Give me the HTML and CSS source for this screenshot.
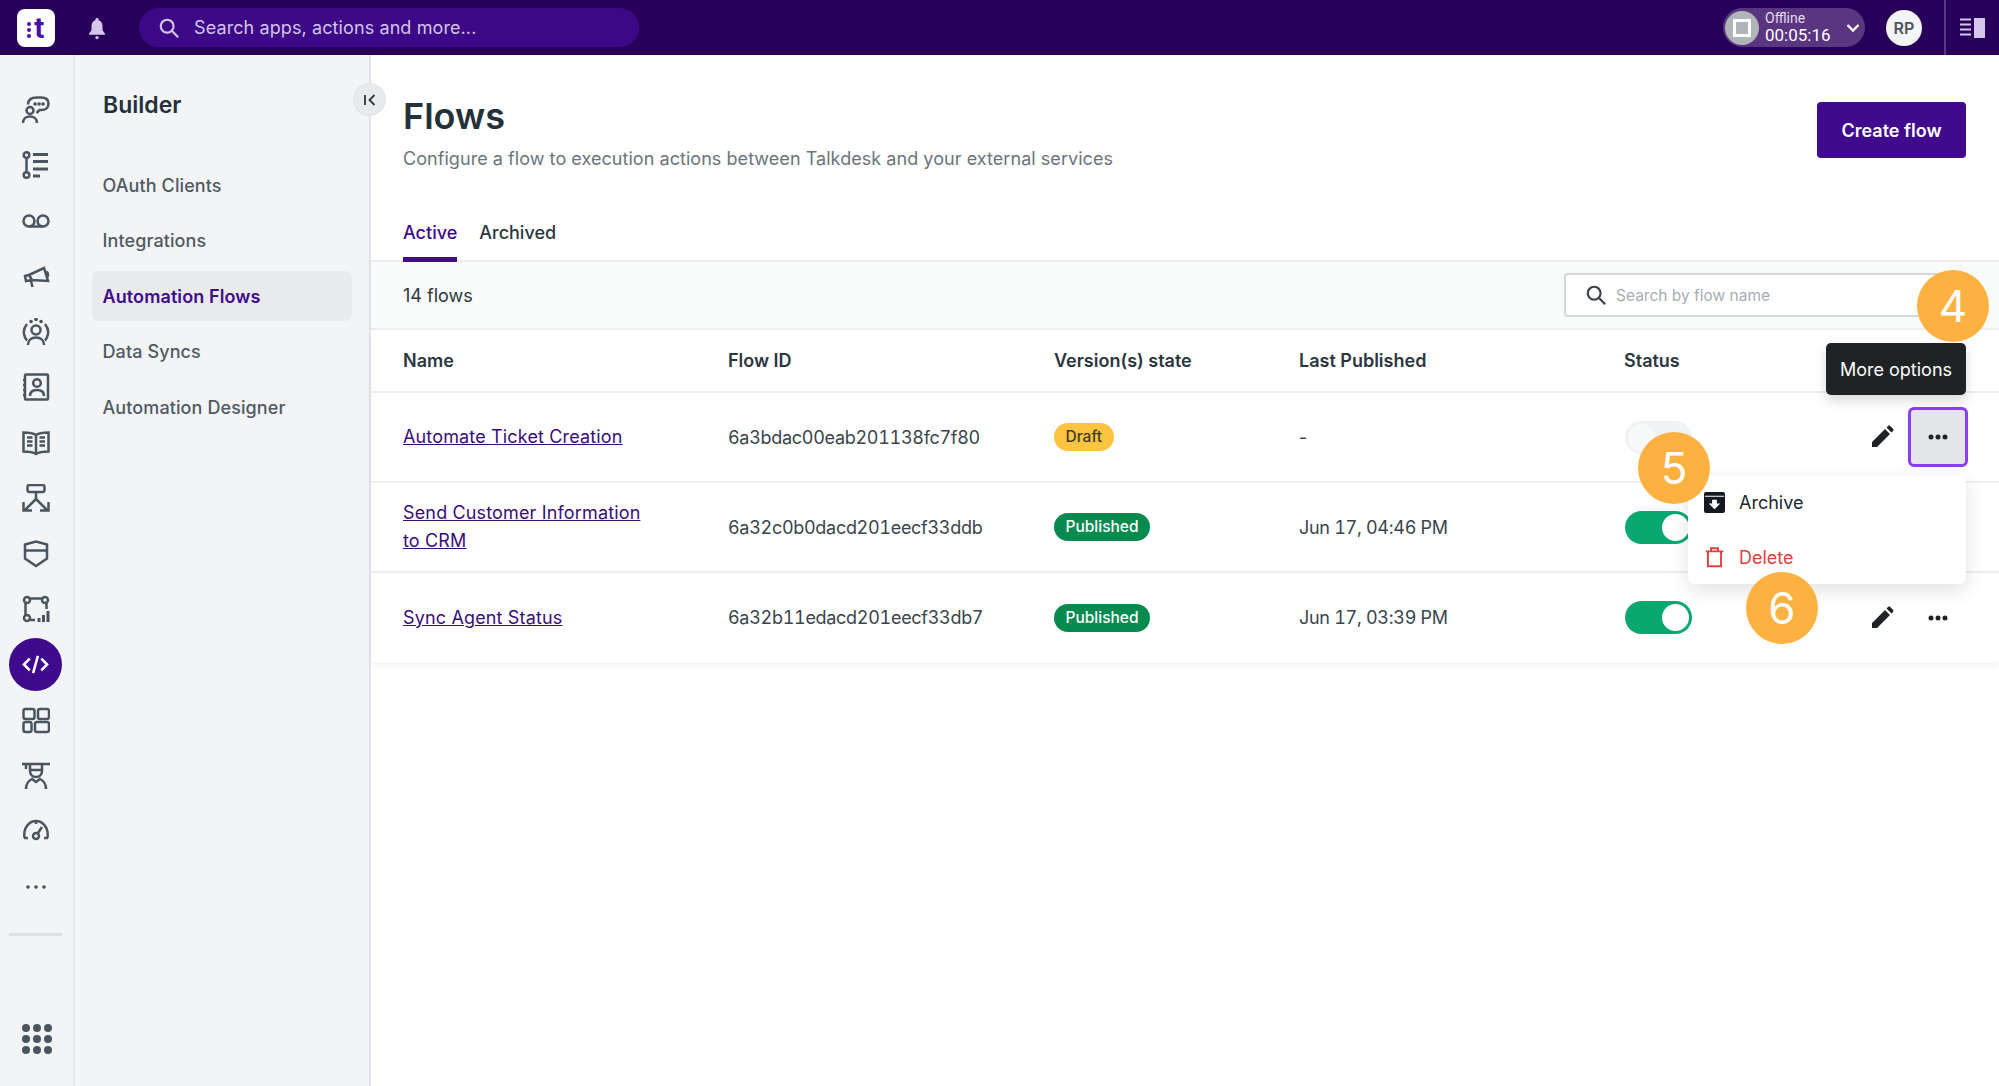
FILE: index.html
```html
<!DOCTYPE html>
<html lang="en">
<head>
  <meta charset="UTF-8">
  <title>Flows</title>
  <link rel="stylesheet" href="styles.css">
</head>
<body>
  <!-- Top bar -->
  <header class="topbar">
    <div class="logo"><span class="logo-dots"><i></i><i></i><i></i></span><span class="logo-t">t</span></div>
    <svg class="bell" viewBox="0 0 24 28"><path d="M12 2c1.200 0 2 .8 2 2v.8c3 1 4.600 3.600 4.600 7v5l2.900 3.700v1.500H2.500v-1.500l2.900-3.700v-5c0-3.400 1.600-6 4.600-7V4c0-1.200.8-2 2-2z"/><circle cx="12" cy="25.500" r="2"/></svg>
    <div class="global-search">
      <svg class="search-icon" viewBox="0 0 24 24"><circle cx="10" cy="10" r="7"/><path d="M15 15l7 7"/></svg>
      <span>Search apps, actions and more...</span>
    </div>
    <div class="topbar-right">
      <div class="presence">
        <div class="presence-dot"><span class="presence-square"></span></div>
        <div class="presence-text">
          <span class="presence-label">Offline</span>
          <span class="presence-time">00:05:16</span>
        </div>
        <svg class="presence-chevron" viewBox="0 0 14 10"><path d="M1.500 2l5.500 5.500L12.500 2"/></svg>
      </div>
      <div class="avatar">RP</div>
      <div class="panel-toggle">
        <svg viewBox="0 0 26 22"><path class="panel-lines" d="M0 2.500h11M0 7.500h11M0 12.500h11M0 17.500h11"/><rect x="14" y="1" width="11" height="20"/></svg>
      </div>
    </div>
  </header>

  <div class="workspace">
    <!-- Icon rail -->
    <nav class="rail">
      <div class="rail-item"><svg viewBox="0 0 28 28"><circle cx="8" cy="14.500" r="3.500"/><path d="M1 27c0-4 3-6.500 7-6.500s7 2.500 7 6.500M6 8.500C6 4 9.500 1.500 15 1.500h4c4.500 0 7.500 2 7.500 6s-3 6.500-7 6.500h-2l-3 3"/><path class="dots" d="M13 8h.1M17 8h.1M21 8h.1"/></svg></div>
      <div class="rail-item"><svg viewBox="0 0 28 28"><circle cx="4.500" cy="4" r="2.800"/><circle cx="4.500" cy="24" r="2.800"/><path d="M4.500 7v14"/><path class="bars" d="M11 3.500h15M11 10.500h15M11 18h15M11 25h7"/></svg></div>
      <div class="rail-item"><svg viewBox="0 0 28 28"><circle cx="7" cy="14" r="5.500"/><circle cx="21" cy="14" r="5.500"/><path d="M7 19.500h14"/></svg></div>
      <div class="rail-item"><svg viewBox="0 0 28 28"><path d="M7 13l15-7 4 13-16-1zM7 13l-4 1 1 5 6-1M9 19l1.500 6M23 10c2-.5 3 1 3 2.500s-1 2.500-2 2.500"/></svg></div>
      <div class="rail-item"><svg viewBox="0 0 28 28"><circle cx="14" cy="12" r="4.500"/><path d="M6 27c0-5 3.500-7.500 8-7.500s8 2.500 8 7.500M5 6C2.500 9 1.500 13 2 16s1.500 5 3 6.500M23 6c2.500 3 3.500 7 3 10s-1.500 5-3 6.500"/><path class="dots" d="M9 3.500h.1M14 1.500h.1M19 3.500h.1"/></svg></div>
      <div class="rail-item"><svg viewBox="0 0 28 28"><rect x="3" y="1.500" width="23" height="25" rx="1"/><circle cx="15" cy="10" r="3.800"/><path d="M8 23c0-4 3-6 7-6s7 2 7 6M1 7h3M1 12h3M1 17h3M1 22h3"/></svg></div>
      <div class="rail-item"><svg viewBox="0 0 28 28"><path d="M14 6C11 4 7 3.500 1.500 3.500v19c5.500 0 9.500.5 12.500 2.500 3-2 7-2.500 12.500-2.500v-19C21 3.500 17 4 14 6zM14 6v19M5 8.500h5.500M5 12.500h5.500M5 16.500h5.500M17.500 8.500H23M17.500 12.500H23M17.500 16.500H23"/></svg></div>
      <div class="rail-item"><svg viewBox="0 0 28 28"><rect x="5.500" y="1" width="17" height="7" rx="2"/><path d="M14 8v7M14 15L3 26M14 15l11 11M1.500 18v8.500H10M26.500 18v8.500H18"/></svg></div>
      <div class="rail-item"><svg viewBox="0 0 28 28"><path d="M3 4.500l11-3 11 3v14l-11 7.500-11-7.500zM3 10.500h22"/></svg></div>
      <div class="rail-item"><svg viewBox="0 0 28 28"><circle cx="5" cy="5" r="3"/><circle cx="23" cy="5" r="3"/><circle cx="5" cy="23" r="3"/><path d="M8 3.500h12M3.500 8v12M24.500 8v6M8 25h5"/><path class="bars" d="M17 27v-4M21.500 27v-7M26 27V16"/></svg></div>
      <div class="rail-item rail-item-active"><div class="rail-circle"><svg viewBox="0 0 28 28"><path d="M8 8l-6 6 6 6M20 8l6 6-6 6M16.500 5l-5 18"/></svg></div></div>
      <div class="rail-item"><svg viewBox="0 0 28 28"><rect x="1.500" y="3" width="11" height="10" rx="2"/><rect x="16" y="3" width="11" height="10" rx="2"/><rect x="1.500" y="16" width="8" height="10" rx="2"/><rect x="13" y="16" width="14" height="10" rx="2"/></svg></div>
      <div class="rail-item"><svg viewBox="0 0 28 28"><path d="M0 2h28M4 2v5M8 3v6c0 4 3 6 6 6s6-2 6-6V3M8 8h12M4 27c0-6 4-9 6-10l4 3 4-3c2 1 6 4 6 10"/></svg></div>
      <div class="rail-item"><svg viewBox="0 0 28 28"><path d="M2.500 21C1 11 7 4 14 4s13 7 11.500 17M2 21h4M22 21h4M14 4v3M16 16l4-6"/><circle cx="14" cy="19" r="3"/></svg></div>
      <div class="rail-item"><svg viewBox="0 0 28 28"><path class="dots" d="M6 14h.1M14 14h.1M22 14h.1"/></svg></div>
      <div class="rail-divider"></div>
      <div class="rail-apps">
        <span></span><span></span><span></span>
        <span></span><span></span><span></span>
        <span></span><span></span><span></span>
      </div>
    </nav>

    <!-- Section menu -->
    <aside class="sidebar">
      <h2 class="sidebar-title">Builder</h2>
      <ul class="sidebar-list">
        <li>OAuth Clients</li>
        <li>Integrations</li>
        <li class="active">Automation Flows</li>
        <li>Data Syncs</li>
        <li>Automation Designer</li>
      </ul>
      <button class="collapse">
        <svg viewBox="0 0 14 14"><path d="M2 2v10M11.500 2l-5 5 5 5"/></svg>
      </button>
    </aside>

    <main class="main">
      <div class="page-head">
        <div>
          <h1>Flows</h1>
          <p>Configure a flow to execution actions between Talkdesk and your external services</p>
        </div>
        <button class="create-flow">Create flow</button>
      </div>

      <div class="tabs">
        <span class="tab tab-active">Active</span>
        <span class="tab">Archived</span>
      </div>

      <div class="filter-bar">
        <span>14 flows</span>
        <div class="flow-search">
          <svg class="search-icon" viewBox="0 0 24 24"><circle cx="10" cy="10" r="7"/><path d="M15 15l7 7"/></svg>
          <span>Search by flow name</span>
        </div>
      </div>

      <div class="flows-table">
        <div class="row head">
          <div>Name</div><div>Flow ID</div><div>Version(s) state</div><div>Last Published</div><div>Status</div>
        </div>
        <div class="row">
          <div><a href="#">Automate Ticket Creation</a></div>
          <div class="num">6a3bdac00eab201138fc7f80</div>
          <div><span class="pill pill-draft">Draft</span></div>
          <div>-</div>
          <div><span class="toggle toggle-off"></span></div>
          <div class="actions">
            <button class="icon-btn"><svg viewBox="0 0 24 24"><path d="M2 22v-5L15 4l5 5L7 22zM16.500 2.500l1.500-1.500c.8-.6 1.500-.6 2.200 0l2.800 2.800c.6.700.6 1.400 0 2.200l-1.500 1.500z"/></svg></button>
            <button class="icon-btn more-focus"><svg viewBox="0 0 24 24"><circle cx="5" cy="12" r="2.500"/><circle cx="12" cy="12" r="2.500"/><circle cx="19" cy="12" r="2.500"/></svg></button>
          </div>
        </div>
        <div class="row">
          <div class="name-wrap"><a href="#">Send Customer Information to CRM</a></div>
          <div class="num">6a32c0b0dacd201eecf33ddb</div>
          <div><span class="pill pill-published">Published</span></div>
          <div class="num">Jun 17, 04:46 PM</div>
          <div><span class="toggle"></span></div>
          <div class="actions"></div>
        </div>
        <div class="row">
          <div><a href="#">Sync Agent Status</a></div>
          <div class="num">6a32b11edacd201eecf33db7</div>
          <div><span class="pill pill-published">Published</span></div>
          <div class="num">Jun 17, 03:39 PM</div>
          <div><span class="toggle"></span></div>
          <div class="actions">
            <button class="icon-btn"><svg viewBox="0 0 24 24"><path d="M2 22v-5L15 4l5 5L7 22zM16.500 2.500l1.500-1.500c.8-.6 1.500-.6 2.200 0l2.800 2.800c.6.700.6 1.400 0 2.200l-1.500 1.500z"/></svg></button>
            <button class="icon-btn"><svg viewBox="0 0 24 24"><circle cx="5" cy="12" r="2.500"/><circle cx="12" cy="12" r="2.500"/><circle cx="19" cy="12" r="2.500"/></svg></button>
          </div>
        </div>
      </div>

      <!-- Overlays -->
      <div class="tooltip">More options</div>
      <div class="menu">
        <div class="menu-item menu-archive">
          <svg class="menu-icon" viewBox="0 0 22 22"><path d="M2 0h18a2 2 0 0 1 2 2v18a2 2 0 0 1-2 2H2a2 2 0 0 1-2-2V2a2 2 0 0 1 2-2z"/><path class="archive-mark" d="M1 4h20v1H1zM8.500 8h5v4H17l-6 6-6-6h3.500z"/></svg>
          <span>Archive</span>
        </div>
        <div class="menu-item menu-delete">
          <svg class="menu-icon" viewBox="0 0 22 24"><path d="M1 5h20M7 4V1.500h8V4M3.500 5v17h15V5"/></svg>
          <span>Delete</span>
        </div>
      </div>
      <div class="step step-4">4</div>
      <div class="step step-5">5</div>
      <div class="step step-6">6</div>
    </main>
  </div>
</body>
</html>
```

FILE: styles.css
```css
* {
  box-sizing: border-box;
}
body {
  margin: 0;
  height: 100vh;
  overflow: hidden;
  display: flex;
  flex-direction: column;
  font-family: Inter, "Liberation Sans", sans-serif;
  color: #1f2a33;
  background-color: #fff;
}
button {
  font-family: inherit;
  border: none;
  cursor: pointer;
}

/* top bar */
.topbar {
  height: 55px;
  flex: none;
  display: flex;
  align-items: center;
  padding-left: 17px;
  background-color: #28005a;
}
.logo {
  width: 38px;
  height: 38px;
  display: flex;
  align-items: center;
  justify-content: center;
  gap: 3px;
  border-radius: 8px;
  background-color: #fff;
  color: #4a0fa8;
}
.logo-dots {
  display: flex;
  flex-direction: column;
  gap: 2px;
  margin-top: 4px;
}
.logo-dots i {
  display: block;
  width: 4px;
  height: 4px;
  border-radius: 50%;
  background-color: #4a0fa8;
}
.logo-t {
  font-size: 28px;
  font-weight: 700;
  line-height: 1;
}
.bell {
  width: 20px;
  height: 24px;
  margin-left: 32px;
  fill: #d6c6ec;
}
.global-search {
  width: 500px;
  height: 39px;
  margin-left: 32px;
  padding-left: 19px;
  display: flex;
  align-items: center;
  gap: 14px;
  border-radius: 20px;
  background-color: #3c0887;
  color: #d4c4ea;
  font-size: 18px;
  letter-spacing: .1px;
}
.search-icon {
  width: 22px;
  height: 22px;
  fill: none;
  stroke: #d4c4ea;
  stroke-width: 2.400;
  flex: none;
}
.topbar-right {
  margin-left: auto;
  display: flex;
  align-items: center;
  height: 100%;
}
.presence {
  width: 142px;
  height: 39px;
  display: flex;
  align-items: center;
  padding-left: 2px;
  border-radius: 20px;
  background-color: #5a3580;
  color: #fff;
  font-family: Roboto, sans-serif;
}
.presence-dot {
  width: 34px;
  height: 34px;
  display: flex;
  align-items: center;
  justify-content: center;
  border-radius: 50%;
  background-color: #b0b5ba;
}
.presence-square {
  width: 18px;
  height: 18px;
  border: 3px solid #fff;
}
.presence-text {
  display: flex;
  flex-direction: column;
  margin-left: 6px;
  line-height: 1;
}
.presence-label {
  font-size: 14px;
  color: #e4dcee;
}
.presence-time {
  font-size: 17px;
  margin-top: 2px;
}
.presence-chevron {
  width: 14px;
  height: 10px;
  margin-left: 15px;
  fill: none;
  stroke: #fff;
  stroke-width: 2.400;
}
.avatar {
  width: 36px;
  height: 36px;
  margin-left: 21px;
  display: flex;
  align-items: center;
  justify-content: center;
  border-radius: 50%;
  background-color: #f3f4f6;
  color: #4a5560;
  font-size: 16px;
  font-weight: 600;
}
.panel-toggle {
  width: 55px;
  height: 100%;
  margin-left: 22px;
  display: flex;
  align-items: center;
  justify-content: center;
  border-left: 2px solid #5a3a80;
}
.panel-toggle svg {
  width: 26px;
  height: 22px;
  fill: #d6c6ec;
}
.panel-lines {
  fill: none;
  stroke: #d6c6ec;
  stroke-width: 2;
}

.workspace {
  flex: 1;
  display: flex;
  min-height: 0;
}

/* icon rail */
.rail {
  width: 75px;
  flex: none;
  padding-top: 27px;
  padding-right: 2px;
  display: flex;
  flex-direction: column;
  align-items: center;
  background-color: #f3f4f6;
  border-right: 2px solid #e6e8eb;
}
.rail-item {
  height: 55.500px;
  flex: none;
  display: flex;
  align-items: center;
  justify-content: center;
}
.rail-item svg {
  width: 28px;
  height: 28px;
  fill: none;
  stroke: #4a5560;
  stroke-width: 2.500;
}
.rail-item .dots {
  stroke-width: 3.600;
  stroke-linecap: round;
}
.rail-item .bars {
  stroke-width: 3;
}
.rail-circle {
  width: 53px;
  height: 53px;
  display: flex;
  align-items: center;
  justify-content: center;
  border-radius: 50%;
  background-color: #3f0a8c;
}
.rail-item .rail-circle svg {
  width: 27px;
  height: 27px;
  stroke: #fff;
  stroke-width: 2.600;
}
.rail-divider {
  width: 53px;
  height: 3px;
  margin-top: 18px;
  background-color: #dcdfe3;
}
.rail-apps {
  margin-top: 88px;
  margin-left: 2px;
  display: grid;
  grid-template-columns: repeat(3, 8px);
  gap: 3px;
  width: 30px;
}
.rail-apps span {
  width: 8px;
  height: 8px;
  border-radius: 50%;
  background-color: #4a5560;
}

/* section menu */
.sidebar {
  width: 296px;
  flex: none;
  position: relative;
  padding: 35px 17px 0 17px;
  background-color: #f3f4f6;
  border-right: 2px solid #e0e3e7;
}
.sidebar-title {
  margin: 0 0 0 11px;
  font-size: 23px;
  line-height: 30px;
  font-weight: 600;
  color: #24303a;
}
.sidebar-list {
  list-style: none;
  margin: 40px 0 0 0;
  padding: 0;
}
.sidebar-list li {
  height: 50px;
  margin-bottom: 5.500px;
  padding-left: 10.500px;
  display: flex;
  align-items: center;
  border-radius: 6px;
  font-size: 18px;
  font-weight: 500;
  letter-spacing: .1px;
  color: #4f5a64;
}
.sidebar-list .active {
  background-color: #e9eaec;
  color: #3f0a8c;
  font-weight: 600;
}
.collapse {
  position: absolute;
  top: 28px;
  right: -17px;
  width: 33px;
  height: 33px;
  padding: 0;
  display: flex;
  align-items: center;
  justify-content: center;
  border-radius: 50%;
  background-color: #e9eaec;
  border: 1px solid #dfe1e4;
}
.collapse svg {
  width: 14px;
  height: 14px;
  fill: none;
  stroke: #2c363f;
  stroke-width: 1.800;
}

/* main content */
.main {
  flex: 1;
  position: relative;
  min-width: 0;
}
.page-head {
  display: flex;
  justify-content: space-between;
  align-items: flex-start;
  padding: 36px 33px 0 32px;
  height: 152px;
}
.page-head h1 {
  margin: 0;
  font-size: 36px;
  line-height: 50px;
  font-weight: 600;
  color: #24303a;
}
.page-head p {
  margin: 5px 0 0 0;
  font-size: 18px;
  line-height: 26px;
  letter-spacing: .05px;
  color: #6b747d;
}
.create-flow {
  margin-top: 11px;
  width: 149px;
  height: 56px;
  border-radius: 4px;
  background-color: #3f0a8c;
  color: #fff;
  font-size: 18px;
  font-weight: 600;
}
.tabs {
  height: 55px;
  padding-left: 32px;
  display: flex;
  gap: 22px;
  border-bottom: 2px solid #eceef0;
}
.tab {
  height: 55px;
  padding-top: 13px;
  font-size: 18px;
  font-weight: 500;
  line-height: 26px;
  color: #2c363f;
}
.tab-active {
  color: #3f0a8c;
  font-weight: 500;
  border-bottom: 5px solid #3f0a8c;
}
.filter-bar {
  height: 68px;
  padding: 0 33px 0 32px;
  display: flex;
  justify-content: space-between;
  align-items: center;
  background-color: #f9fafa;
  border-bottom: 2px solid #eceef0;
  font-size: 18px;
  color: #2c363f;
}
.flow-search {
  width: 402px;
  height: 44px;
  padding-left: 19px;
  display: flex;
  align-items: center;
  gap: 9px;
  border: 2px solid #d3d7db;
  border-radius: 4px;
  background-color: #fff;
  color: #a6adb4;
  font-size: 15.500px;
}
.flow-search .search-icon {
  stroke: #3a444d;
}

/* table */
.flows-table {
  box-shadow: 0 5px 6px rgba(0, 0, 0, .04);
}
.row {
  height: 90px;
  padding-left: 32px;
  display: grid;
  grid-template-columns: 325px 326px 245px 325px 111px 1fr;
  align-items: center;
  border-bottom: 2px solid #eceef0;
  font-size: 18px;
  color: #3a444d;
}
.row:last-child {
  height: 89px;
  border-bottom: none;
}
.row.head {
  height: 63px;
  font-weight: 600;
  color: #2c363f;
}
.row a {
  color: #3a0d7a;
  line-height: 28px;
  letter-spacing: .15px;
}
.row .num {
  font-variant-numeric: tabular-nums;
  letter-spacing: -.3px;
}
.name-wrap {
  width: 250px;
  line-height: 28px;
}
.pill {
  display: inline-block;
  padding: 0 11.500px;
  height: 28px;
  line-height: 28px;
  border-radius: 14px;
  font-size: 15.500px;
  font-weight: 500;
}
.pill-draft {
  background-color: #fec33f;
  color: #3d3a2c;
}
.pill-published {
  background-color: #068a4f;
  color: #fff;
}
.toggle {
  display: block;
  width: 67px;
  height: 33px;
  margin-left: 1px;
  position: relative;
  border-radius: 17px;
  background-color: #0aa871;
}
.toggle::after {
  content: "";
  position: absolute;
  top: 3px;
  right: 3px;
  width: 27px;
  height: 27px;
  border-radius: 50%;
  background-color: #fff;
}
.toggle-off {
  background-color: #f1f2f3;
}
.toggle-off::after {
  left: 3px;
  right: auto;
  background-color: #f7f8f8;
}
.actions {
  display: flex;
  justify-content: flex-end;
  align-items: center;
  padding-right: 31px;
}
.icon-btn {
  width: 60px;
  height: 60px;
  padding: 0;
  display: flex;
  align-items: center;
  justify-content: center;
  background: none;
  border-radius: 6px;
}
.icon-btn:first-child {
  width: 52px;
}
.icon-btn svg {
  width: 24px;
  height: 24px;
  fill: #1f2326;
}
.more-focus {
  border: 3px solid #8a3ff0;
  background-color: #e4e5e8;
}

/* overlays */
.tooltip {
  position: absolute;
  top: 288px;
  left: 1455px;
  width: 140px;
  height: 52px;
  display: flex;
  align-items: center;
  justify-content: center;
  border-radius: 5px;
  background-color: #1f2326;
  color: #fff;
  font-size: 18px;
  box-shadow: 0 6px 12px rgba(0, 0, 0, .15);
}
.menu {
  position: absolute;
  top: 421px;
  left: 1317px;
  width: 278px;
  height: 108px;
  border-radius: 6px;
  background-color: #fff;
  box-shadow: 0 6px 20px rgba(0, 0, 0, .12);
}
.menu-item {
  height: 54px;
  padding-left: 16px;
  display: flex;
  align-items: center;
  gap: 14px;
  font-size: 18px;
  color: #20262c;
}
.menu-archive {
  padding-bottom: 2px;
}
.menu-icon {
  width: 21px;
  height: 21px;
  fill: #141a22;
}
.archive-mark {
  fill: #fff;
}
.menu-delete {
  color: #e04040;
}
.menu-delete .menu-icon {
  fill: none;
  stroke: #e04040;
  stroke-width: 2.200;
}
.step {
  position: absolute;
  width: 72px;
  height: 72px;
  display: flex;
  align-items: center;
  justify-content: center;
  border-radius: 50%;
  background-color: #fdb140;
  color: #fff;
  font-size: 44px;
}
.step-4 {
  top: 215px;
  left: 1546px;
}
.step-5 {
  top: 377px;
  left: 1267px;
}
.step-6 {
  top: 517px;
  left: 1375px;
}
```
